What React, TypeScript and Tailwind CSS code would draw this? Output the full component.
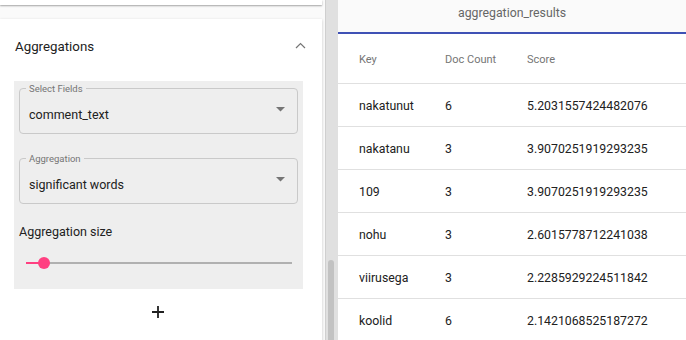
import React from 'react'

const rows = [
  ['nakatunut', '6', '5.2031557424482076'],
  ['nakatanu', '3', '3.9070251919293235'],
  ['109', '3', '3.9070251919293235'],
  ['nohu', '3', '2.6015778712241038'],
  ['viirusega', '3', '2.2285929224511842'],
  ['koolid', '6', '2.1421068525187272'],
]

function Arrow() {
  return (
    <svg width="9" height="5" viewBox="0 0 9 5" className="shrink-0 -mt-[4px]">
      <path d="M0 0 L9 0 L4.5 4.5 Z" fill="#757575" />
    </svg>
  )
}

function OutlinedSelect({ label, value }: { label: string; value: string }) {
  return (
    <div className="relative h-[46px] rounded-[4px] border border-[#c9c9c9] flex items-center pl-[9px] pr-[12px]">
      <span className="absolute -top-[5px] left-[6px] px-[3px] bg-[#eeeeee] text-[9.5px] leading-[10px] text-[#757575]">
        {label}
      </span>
      <span className="flex-1 pt-[9px] text-[12.5px] text-[#212121]">{value}</span>
      <Arrow />
    </div>
  )
}

export default function App() {
  return (
    <div className="flex h-[340px] w-[686px] overflow-hidden bg-white font-['Roboto',sans-serif]">
      {/* left column */}
      <div className="w-[325px] shrink-0 bg-[#fafafa]">
        <div className="h-[5px] w-[322px] bg-white shadow-[0_1px_2px_rgba(0,0,0,0.35)]" />
        <div className="mt-[14px] w-[322px] bg-white shadow-[0_1px_3px_rgba(0,0,0,0.2)] pb-[60px]">
          <div className="flex h-[56px] items-center justify-between pl-[15px] pr-[16px]">
            <span className="text-[13.3px] text-[#212121]">Aggregations</span>
            <svg width="11" height="7" viewBox="0 0 11 7" className="-mt-[4px]">
              <path d="M1 6 L5.5 1.5 L10 6" fill="none" stroke="#757575" strokeWidth="1.2" />
            </svg>
          </div>
          <div className="px-[14px] pt-[6px]">
            <div className="w-[289px] h-[208px] bg-[#eeeeee] px-[5px] pt-[7px]">
              <OutlinedSelect label="Select Fields" value="comment_text" />
              <div className="h-[24px]" />
              <OutlinedSelect label="Aggregation" value="significant words" />
              <div className="mt-[20px] text-[12.5px] leading-[16px] text-[#212121]">Aggregation size</div>
              <div className="relative mt-[22px] ml-[7px] mr-[6px] h-[2px] bg-[#b0b0b0]">
                <div className="absolute left-0 top-0 h-[2px] w-[18px] bg-[#ff4081]" />
                <div className="absolute left-[12px] -top-[5px] h-[12px] w-[12px] rounded-full bg-[#ff4081]" />
              </div>
            </div>
            <div className="flex justify-center pt-[17px] pr-[6px]">
              <svg width="12" height="12" viewBox="0 0 12 12">
                <path d="M6 0 V12 M0 6 H12" stroke="#212121" strokeWidth="1.8" />
              </svg>
            </div>
          </div>
        </div>
      </div>

      {/* scrollbar */}
      <div className="w-[13px] shrink-0 border-l border-[#cfcfcf] bg-[#e0e0e0] pt-[260px] pl-[2px]">
        <div className="h-[100px] w-[6px] rounded-t-[3px] bg-[#c2c2c2]" />
      </div>

      {/* right column */}
      <div className="flex-1">
        <div className="flex h-[34px] items-center justify-center border-b-2 border-[#3f51b5] bg-[#fafafa] pb-[5px] text-[12.3px] text-[#666666]">
          aggregation_results
        </div>
        <div className="grid h-[50px] grid-cols-[86px_82px_1fr] items-center border-b border-[#e0e0e0] pl-[21px] pt-[3px] text-[11px] text-[#757575]">
          <span>Key</span>
          <span>Doc Count</span>
          <span>Score</span>
        </div>
        {rows.map((r, i) => (
          <div
            key={i}
            className="grid h-[43px] grid-cols-[86px_82px_1fr] items-center border-b border-[#e0e0e0] pl-[21px] pt-[3px] text-[12.3px] text-[#212121]"
          >
            <span>{r[0]}</span>
            <span>{r[1]}</span>
            <span>{r[2]}</span>
          </div>
        ))}
      </div>
    </div>
  )
}
